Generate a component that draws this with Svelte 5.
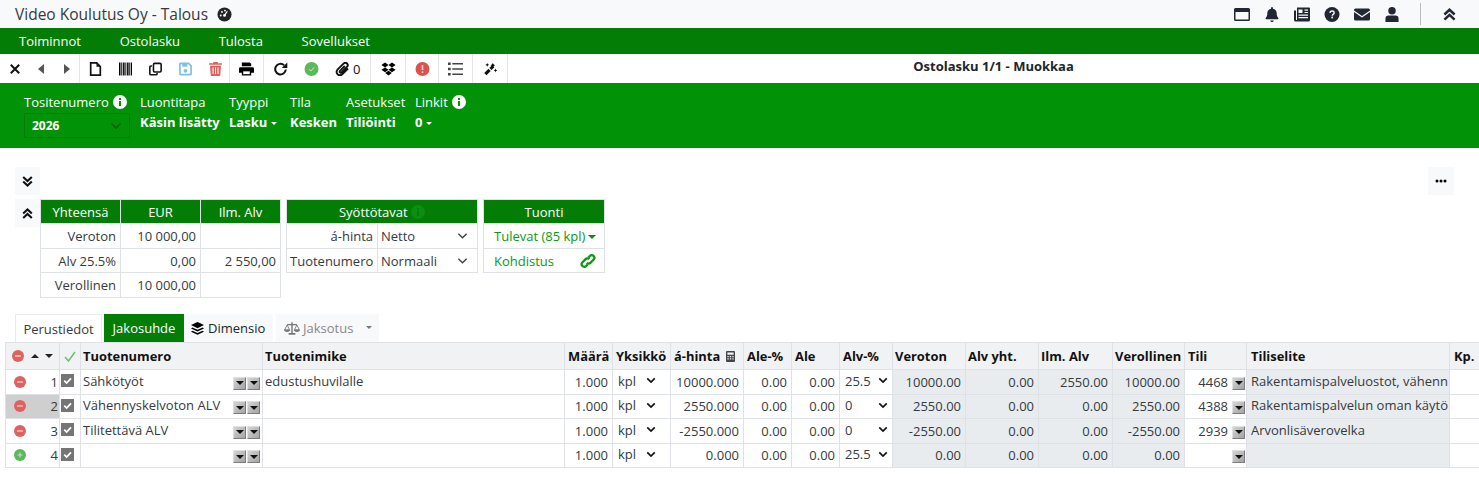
<script>
  const cols = ['', '', 'Tuotenumero', 'Tuotenimike', 'Määrä', 'Yksikkö', 'á-hinta', 'Ale-%', 'Ale', 'Alv-%', 'Veroton', 'Alv yht.', 'Ilm. Alv', 'Verollinen', 'Tili', 'Tiliselite', 'Kp.'];
  const rows = [
    { n: 1, tn: 'Sähkötyöt', nimi: 'edustushuvilalle', h: '10000.000', alv: '25.5', v: '10000.00', ay: '0.00', ia: '2550.00', vl: '10000.00', tili: '4468', sel: 'Rakentamispalveluostot, vähenn' },
    { n: 2, tn: 'Vähennyskelvoton ALV', nimi: '', h: '2550.000', alv: '0', v: '2550.00', ay: '0.00', ia: '0.00', vl: '2550.00', tili: '4388', sel: 'Rakentamispalvelun oman käytö' },
    { n: 3, tn: 'Tilitettävä ALV', nimi: '', h: '-2550.000', alv: '0', v: '-2550.00', ay: '0.00', ia: '0.00', vl: '-2550.00', tili: '2939', sel: 'Arvonlisäverovelka' },
    { n: 4, tn: '', nimi: '', h: '0.000', alv: '25.5', v: '0.00', ay: '0.00', ia: '0.00', vl: '0.00', tili: '', sel: '' }
  ];
  const menu = ['Toiminnot', 'Ostolasku', 'Tulosta', 'Sovellukset'];
</script>

{#snippet chev(cls)}
  <svg class={cls} viewBox="0 0 12 8"><path d="M1.500 1.500 6 6l4.500-4.500" fill="none" stroke="currentColor" stroke-width="1.600"/></svg>
{/snippet}
{#snippet dbl(up)}
  <svg class="dbl" viewBox="0 0 12 12"><g transform={up ? '' : 'rotate(180 6 6)'}><path d="M1.300 6 6 1.600 10.700 6M1.300 10.800 6 6.400l4.700 4.400" fill="none" stroke="currentColor" stroke-width="2.300"/></g></svg>
{/snippet}
{#snippet info()}
  <svg class="info" viewBox="0 0 14 14"><circle cx="7" cy="7" r="7" fill="currentColor"/><rect x="6" y="6" width="2" height="5" fill="#029208"/><rect x="6" y="3" width="2" height="2" fill="#029208"/></svg>
{/snippet}
{#snippet combo()}
  <span class="combo"><i></i></span>
{/snippet}

<div class="page">
  <header class="top">
    <div class="brand">
      <span>Video Koulutus Oy - Talous</span>
      <svg class="gauge" viewBox="0 0 16 16"><circle cx="8" cy="8" r="7.500" fill="#212529"/><circle cx="8" cy="9" r="1.500" fill="#fff"/><path d="M8 9l3-4.500" stroke="#fff" stroke-width="1.300"/><circle cx="4" cy="9" r="1" fill="#fff"/><circle cx="5.300" cy="5.200" r="1" fill="#fff"/><circle cx="8.500" cy="3.800" r="1" fill="#fff"/></svg>
    </div>
    <div class="top-icons">
      <svg viewBox="0 0 16 13"><path fill-rule="evenodd" d="M1.500 0h13A1.500 1.500 0 0 1 16 1.500v10a1.500 1.500 0 0 1-1.500 1.500h-13A1.500 1.500 0 0 1 0 11.500v-10A1.500 1.500 0 0 1 1.500 0ZM1.500 4v7.500h13V4Z"/></svg>
      <svg viewBox="0 0 14 16"><path d="M7 0c.6 0 1 .4 1 1v.8c2.400.4 4 2.400 4 4.700 0 2.800.6 4 1.700 5.200.4.500.1 1.300-.6 1.300H.9c-.7 0-1-.8-.6-1.300C1.400 10.500 2 9.300 2 6.500c0-2.300 1.600-4.300 4-4.700V1c0-.6.400-1 1-1Z"/><path d="M5.300 14.300h3.400C8.700 15.300 8 16 7 16s-1.700-.7-1.700-1.700Z"/></svg>
      <svg viewBox="0 0 16 14"><path fill-rule="evenodd" d="M3 0h12a1 1 0 0 1 1 1v11.500a1.500 1.500 0 0 1-1.500 1.500H1.500A1.500 1.500 0 0 1 0 12.500V3h2v9.500h.5a.5.500 0 0 0 .5-.5ZM4.500 2v3.500h4V2Zm6 0v1.200H14V2Zm0 2.400v1.100H14V4.400ZM4.500 7v1.200H14V7Zm0 2.600v1.200H14V9.600Z"/></svg>
      <svg viewBox="0 0 16 16"><circle cx="8" cy="8" r="8"/><path d="M5.800 6.300C5.900 5 6.800 4.200 8.100 4.200c1.300 0 2.200.8 2.200 1.900 0 1.700-2 1.700-2 3.100" fill="none" stroke="#f8f9fa" stroke-width="1.500"/><rect x="7.300" y="10.300" width="1.800" height="1.800" fill="#f8f9fa"/></svg>
      <svg viewBox="0 0 16 12"><path d="M1.500 0h13A1.500 1.500 0 0 1 16 1.500v.4L8 7.500 0 1.900v-.4A1.500 1.500 0 0 1 1.500 0Z"/><path d="M0 3.500 8 9l8-5.500v7A1.500 1.500 0 0 1 14.500 12h-13A1.500 1.500 0 0 1 0 10.500Z"/></svg>
      <svg viewBox="0 0 14 16"><circle cx="7" cy="4" r="4"/><path d="M3.500 9h7A3.500 3.500 0 0 1 14 12.500V16H0v-3.500A3.500 3.500 0 0 1 3.500 9Z"/></svg>
      <span class="vr"></span>
      <span class="collapse">{@render dbl(true)}</span>
    </div>
  </header>

  <nav class="menu">
    {#each menu as m}<span>{m}</span>{/each}
  </nav>

  <div class="toolbar">
    <div class="tools">
      <div class="grp g1">
        <span class="slot"><svg class="x" viewBox="0 0 10 10"><path d="M.8.800l8.400 8.400m0-8.400L.8 9.200" stroke="#111" stroke-width="2"/></svg></span>
        <span class="slot"><svg class="tri" viewBox="0 0 6 10"><path d="M6 0v10L0 5Z"/></svg></span>
        <span class="slot"><svg class="tri" viewBox="0 0 6 10"><path d="M0 0v10l6-5Z"/></svg></span>
      </div>
      <div class="grp g2">
        <span class="slot"><svg class="ic" viewBox="0 0 12 14"><path d="M1.200.9h6l3.600 3.600v8.600H1.200Z" fill="#fff" stroke="#111" stroke-width="1.700"/><path d="M7 .9v3.800h3.800" fill="#111"/></svg></span>
        <span class="slot"><svg class="ic" viewBox="0 0 13 13"><path d="M0 0h1.500v13H0Zm2.300 0h1v13h-1Zm1.800 0h1.500v13H4.100Zm2.300 0h.9v13h-.9Zm1.700 0h1.500v13H8.100Zm2.200 0h1v13h-1Zm1.700 0h1v13h-1Z"/></svg></span>
        <span class="slot"><svg class="ic" viewBox="0 0 14 14"><rect x="4.800" y=".9" width="8.300" height="9.400" rx="1.300" fill="none" stroke="#111" stroke-width="1.700"/><path d="M3.200 3.800H2A1.200 1.200 0 0 0 .9 5v7c0 .7.500 1.200 1.100 1.200h5.500c.6 0 1.200-.5 1.200-1.200v-.7" fill="none" stroke="#111" stroke-width="1.700"/></svg></span>
        <span class="slot"><svg class="ic" viewBox="0 0 14 14"><path d="M1.600 1h8.700L13 3.700v8.700a.6.600 0 0 1-.6.600H1.600a.6.600 0 0 1-.6-.6V1.600a.6.600 0 0 1 .6-.6Z" fill="#fff" stroke="#7cc0e6" stroke-width="1.800"/><rect x="3.500" y="1.500" width="5.500" height="3" fill="#7cc0e6"/><circle cx="7" cy="9" r="2" fill="#7cc0e6"/></svg></span>
        <span class="slot"><svg class="ic" viewBox="0 0 13 14"><path d="M4.500 0h4l.6 1.200H13v1.600H0V1.200h3.900Z" fill="#dd6360"/><path d="M1 3.800h11l-.7 9.100c0 .6-.5 1.100-1.100 1.100H2.800c-.6 0-1.100-.5-1.100-1.100Z" fill="#dd6360"/><path d="M4 5.500v6.500m2.500-6.500v6.500M9 5.500v6.500" stroke="#fff" stroke-width="1"/></svg></span>
      </div>
      <div class="grp g3">
        <svg class="ic big" viewBox="0 0 16 14"><path d="M3 0h8.500L13 1.500V4H3Z"/><path d="M1.500 5h13A1.500 1.500 0 0 1 16 6.500V11h-3v3H3v-3H0V6.500A1.500 1.500 0 0 1 1.500 5Z"/><rect x="4.500" y="9.500" width="7" height="3" fill="#fff"/></svg>
      </div>
      <div class="grp g4">
        <span class="slot s31"><svg class="ic big" viewBox="0 0 14 14"><path d="M12.300 7.500a5.300 5.300 0 1 1-1.700-4.300" fill="none" stroke="#111" stroke-width="2"/><path d="M13.800.5v5.600H8.200Z" fill="#111"/></svg></span>
        <span class="slot s31"><svg class="ic big" viewBox="0 0 14 14"><circle cx="7" cy="7" r="7" fill="#5cb85c"/><path d="M4.500 7.200l1.800 1.800 3.400-3.600" fill="none" stroke="#cfeacf" stroke-width="1"/></svg></span>
        <span class="slot s31"><svg class="ic big" viewBox="0 0 14 14"><path d="M12.500 6.500 7 12c-1.500 1.400-3.700 1.500-5 .2-1.300-1.300-1.200-3.500.2-4.900L8 1.600c1-1 2.500-1 3.500-.1.900.9.900 2.400-.1 3.400L6 10.300c-.5.500-1.200.5-1.600.1-.4-.4-.4-1.100.1-1.600L9.300 4" fill="none" stroke="#111" stroke-width="1.900"/></svg></span>
        <b class="count">0</b>
      </div>
      <div class="grp g5">
        <svg class="ic big" viewBox="0 0 16 14"><path d="M4.300 0 8 2.600 4.300 5.300.4 2.700Zm7.400 0 3.900 2.700-3.900 2.600L8 2.600ZM4.300 5.300 8 7.900 4.300 10.500.4 7.900Zm7.400 0 3.900 2.600-3.900 2.600L8 7.900ZM4.500 11.300 8 8.800l3.500 2.500L8 14Z"/></svg>
      </div>
      <div class="grp g6">
        <svg class="ic big" viewBox="0 0 14 14"><circle cx="7" cy="7" r="7" fill="#d9534f"/><rect x="6.200" y="3" width="1.600" height="5" fill="#f6d5d4"/><rect x="6.200" y="9.300" width="1.600" height="1.700" fill="#f6d5d4"/></svg>
      </div>
      <div class="grp g7">
        <svg class="ic big" viewBox="0 0 14 12"><path fill="#444" d="M0 0h2.500v2.200H0Zm4 .3h10v1.600H4ZM0 4.900h2.500v2.200H0Zm4 .3h10v1.600H4ZM0 9.800h2.500V12H0Zm4 .3h10v1.600H4Z"/></svg>
      </div>
      <div class="grp g8">
        <svg class="ic" viewBox="0 0 14 14"><path d="M1.500 12.500 6 8" stroke="#111" stroke-width="3.400"/><path d="M7 7l3-3" stroke="#111" stroke-width="3.400"/><path d="M9.500.5l.9 1.600 1.600.9-1.600.9-.9 1.600-.9-1.600L7 3l1.600-.9ZM12.500 6.500l.6 1.400 1.400.6-1.400.6-.6 1.400-.6-1.400-1.400-.6 1.400-.6ZM3.500.5l.6 1.400 1.400.6-1.400.6-.6 1.400-.6-1.400L1.500 2.500l1.400-.6Z"/></svg>
      </div>
    </div>
    <div class="tool-title">Ostolasku 1/1 - Muokkaa</div>
  </div>

  <section class="hero">
    <div class="f f1"><label>Tositenumero {@render info()}</label><div class="yearsel"><b>2026</b>{@render chev('yc')}</div></div>
    <div class="f f2"><label>Luontitapa</label><strong>Käsin lisätty</strong></div>
    <div class="f f3"><label>Tyyppi</label><strong>Lasku <i class="caret"></i></strong></div>
    <div class="f f4"><label>Tila</label><strong>Kesken</strong></div>
    <div class="f f5"><label>Asetukset</label><strong>Tiliöinti</strong></div>
    <div class="f f6"><label>Linkit {@render info()}</label><strong>0 <i class="caret"></i></strong></div>
  </section>

  <section class="main">
    <div class="row1">
      <span class="sq">{@render dbl(false)}</span>
      <span class="sq more"><svg viewBox="0 0 12 4"><circle cx="2" cy="2" r="1.500"/><circle cx="6" cy="2" r="1.500"/><circle cx="10" cy="2" r="1.500"/></svg></span>
    </div>
    <div class="panels">
      <span class="sq sq2">{@render dbl(true)}</span>
      <table class="mini t1">
        <thead><tr><th>Yhteensä</th><th>EUR</th><th>Ilm. Alv</th></tr></thead>
        <tbody>
          <tr><td>Veroton</td><td>10 000,00</td><td></td></tr>
          <tr><td>Alv 25.5%</td><td>0,00</td><td>2 550,00</td></tr>
          <tr><td>Verollinen</td><td>10 000,00</td><td></td></tr>
        </tbody>
      </table>
      <table class="mini t2">
        <colgroup><col class="k1" /><col class="k2" /></colgroup>
        <thead><tr><th colspan="2">Syöttötavat <svg class="info dk" viewBox="0 0 14 14"><circle cx="7" cy="7" r="7" fill="#0a8f12"/><rect x="6" y="6" width="2" height="5" fill="#04800a"/><rect x="6" y="3" width="2" height="2" fill="#04800a"/></svg></th></tr></thead>
        <tbody>
          <tr><td>á-hinta</td><td class="sel"><span>Netto</span>{@render chev('sc')}</td></tr>
          <tr><td>Tuotenumero</td><td class="sel"><span>Normaali</span>{@render chev('sc')}</td></tr>
        </tbody>
      </table>
      <table class="mini t3">
        <thead><tr><th>Tuonti</th></tr></thead>
        <tbody>
          <tr><td class="gr"><span>Tulevat (85 kpl)</span><i class="dn"></i></td></tr>
          <tr><td class="gr"><span>Kohdistus</span>
            <svg class="lnk" viewBox="0 0 14 14"><path d="M6 8.500c.8.900 2.200 1 3.100.1l2.700-2.700c1-1 1-2.400.1-3.300-.9-.9-2.400-.9-3.300.1L7.300 4" fill="none" stroke="#0a9a10" stroke-width="2"/><path d="M8 5.500c-.8-.9-2.200-1-3.100-.1L2.200 8.100c-1 1-1 2.400-.1 3.300.9.900 2.400.9 3.300-.1L6.700 10" fill="none" stroke="#0a9a10" stroke-width="2"/></svg>
          </td></tr>
        </tbody>
      </table>
    </div>

    <div class="tabs">
      <span class="tab active">Perustiedot</span>
      <span class="tab green">Jakosuhde</span>
      <span class="tab light"><svg viewBox="0 0 14 14"><path d="M7 0l7 3.300-7 3.300L0 3.300Z"/><path d="M1.500 5.800 7 8.400l5.500-2.600L14 6.900 7 10.200 0 6.900Z"/><path d="M1.500 9.300 7 11.900l5.500-2.600 1.500 1.100L7 13.700 0 10.400Z"/></svg>Dimensio</span>
      <span class="tab light off"><svg viewBox="0 0 18 14"><path d="M8.200 0h1.600v12h3v2h-7.600v-2h3ZM3.500 2h11v1.300h-11Z" fill="#777"/><path d="M3.500 3 .7 8.500h5.600ZM14.500 3l-2.800 5.500h5.600Z" fill="none" stroke="#777"/><path d="M0 8.500h7C7 10 5.500 11 3.500 11S0 10 0 8.500Zm11 0h7c0 1.500-1.500 2.500-3.500 2.500S11 10 11 8.500Z" fill="#777"/></svg>Jaksotus<i class="caret gy"></i></span>
    </div>

    <div class="grid">
      <div class="gr-row head">
        <div class="c c0 hdrctl">
          <svg class="rnd" viewBox="0 0 12 12"><circle cx="6" cy="6" r="6" fill="#dd6360"/><rect x="3" y="5.200" width="6" height="1.600" fill="#f3c0be"/></svg>
          <i class="up"></i><i class="down"></i>
        </div>
        <div class="c c1 ctr"><svg class="chk" viewBox="0 0 12 11"><path d="M1 6l3.500 4L11 1" fill="none" stroke="#6cc070" stroke-width="1.500"/></svg></div>
        {#each cols.slice(2) as c, i}
          <div class="c hc c{i + 2}">{c}{#if c === 'á-hinta'}<svg class="calc" viewBox="0 0 10 12"><path fill-rule="evenodd" d="M1 0h8a1 1 0 0 1 1 1v10a1 1 0 0 1-1 1H1a1 1 0 0 1-1-1V1a1 1 0 0 1 1-1Zm.5 1.500v2.500h7V1.500Zm0 4v1.300h1.500V5.500Zm2.700 0v1.300h1.600V5.500Zm2.800 0v1.300h1.500V5.500Zm-5.500 2.500v1.300h1.500V8Zm2.700 0v1.300h1.600V8Zm2.800 0v1.300h1.500V8Z"/></svg>{/if}</div>
        {/each}
      </div>
      {#each rows as r}
        <div class="gr-row">
          <div class="c c0 numc" class:hl={r.n === 2}>
            {#if r.n === 4}
              <svg class="rnd" viewBox="0 0 12 12"><circle cx="6" cy="6" r="6" fill="#5cb85c"/><path d="M3.500 6h5M6 3.500v5" stroke="#bfe5bf" stroke-width="1.100"/></svg>
            {:else}
              <svg class="rnd" viewBox="0 0 12 12"><circle cx="6" cy="6" r="6" fill="#dd6360"/><rect x="3" y="5.300" width="6" height="1.400" fill="#f3c0be"/></svg>
            {/if}
            <span>{r.n}</span>
          </div>
          <div class="c c1 cbc"><span class="cb"><svg viewBox="0 0 12 12"><path d="M3 6.200l2.200 2.200 4-4.400" fill="none" stroke="#fff" stroke-width="1.600"/></svg></span></div>
          <div class="c c2 txt"><span>{r.tn}</span><em>{@render combo()}{@render combo()}</em></div>
          <div class="c c3 txt">{r.nimi}</div>
          <div class="c c4 num">1.000</div>
          <div class="c c5 txt dd"><span>kpl</span><svg viewBox="0 0 12 8"><path d="M1.500 1.500 6 6l4.500-4.500" fill="none" stroke="#111" stroke-width="2"/></svg></div>
          <div class="c c6 num">{r.h}</div>
          <div class="c c7 num">0.00</div>
          <div class="c c8 num">0.00</div>
          <div class="c c9 txt dd d2"><span>{r.alv}</span><svg viewBox="0 0 12 8"><path d="M1.500 1.500 6 6l4.500-4.500" fill="none" stroke="#111" stroke-width="2"/></svg></div>
          <div class="c c10 num ro">{r.v}</div>
          <div class="c c11 num ro">{r.ay}</div>
          <div class="c c12 num ro">{r.ia}</div>
          <div class="c c13 num ro">{r.vl}</div>
          <div class="c c14 tili"><span>{r.tili}</span>{@render combo()}</div>
          <div class="c c15 txt ro">{r.sel}</div>
          <div class="c c16"></div>
        </div>
      {/each}
    </div>
  </section>
</div>

<style>
  :global(body) { margin: 0; background: #fff; overflow: hidden; }
  .page { width: 1479px; height: 491px; font-family: "Open Sans", "Noto Sans", sans-serif; font-size: 13px; color: #212529; overflow: hidden; }
  svg { display: block; flex: none; }

  .top { height: 28px; background: #f8f9fa; display: flex; align-items: center; justify-content: space-between; box-sizing: border-box; padding: 0 23px 0 15px; }
  .brand { display: flex; align-items: center; gap: 9px; font-size: 15.500px; color: #343a40; white-space: nowrap; }
  .gauge { width: 15px; height: 15px; }
  .top-icons { display: flex; align-items: center; fill: #212733; }
  .top-icons > svg { width: 16px; height: 15px; margin-right: 14px; }
  .vr { width: 1px; height: 22px; background: #b9bdc2; margin: 0 22px 0 6px; }
  .collapse { width: 13px; color: #212733; }
  .collapse .dbl { width: 13px; height: 13px; }
  .dbl { width: 11px; height: 11px; }

  .menu { height: 26px; background: #047d07; color: #fff; display: flex; align-items: center; padding-left: 19px; gap: 38.700px; font-size: 13px; font-weight: 500; }

  .toolbar { height: 29px; background: #fff; display: flex; align-items: stretch; }
  .tools { display: flex; width: 508px; flex: none; border-right: 1px solid #e3e5e8; box-sizing: border-box; }
  .grp { display: flex; align-items: center; border-right: 1px solid #e3e5e8; box-sizing: border-box; justify-content: center; }
  .grp:last-child { border-right: 0; }
  .slot { display: flex; justify-content: center; align-items: center; width: 30px; flex: none; }
  .g1 { width: 80px; padding-left: 2px; justify-content: flex-start; }
  .g1 .slot { width: 26px; }
  .g2 { width: 150px; justify-content: flex-start; }
  .g3 { width: 34px; }
  .g4 { width: 107px; padding-left: 1px; justify-content: flex-start; }
  .s31 { width: 31px; }
  .g5 { width: 35px; }
  .g6 { width: 33px; }
  .g7 { width: 34px; }
  .g8 { flex: 1; }
  .x { width: 10px; height: 10px; }
  .ic { width: 13px; height: 14px; }
  .ic.big { width: 15px; height: 14px; }
  .tri { width: 6px; height: 10px; fill: #555; }
  .count { font-weight: 400; font-size: 13px; color: #111; margin-left: -5px; }
  .tool-title { flex: 1; text-align: center; font-weight: 700; font-size: 13px; line-height: 25px; color: #212529; }

  .hero { height: 65px; background: #029208; color: #fff; display: flex; align-items: flex-start; padding: 10px 0 0 24px; box-sizing: border-box; }
  .f label { display: flex; align-items: center; gap: 4px; font-size: 13px; height: 18px; white-space: nowrap; }
  .f strong { display: block; font-size: 13px; margin-top: 2px; line-height: 18px; white-space: nowrap; font-weight: 700; }
  .f1 { width: 116px; }
  .f2 { width: 89px; }
  .f3 { width: 61px; }
  .f4 { width: 56px; }
  .f5 { width: 69px; }
  .info { width: 14px; height: 14px; color: #fff; display: inline-block; }
  .yearsel { width: 106px; height: 25px; box-sizing: border-box; border: 1px solid #07780c; margin-top: 2px; display: flex; align-items: center; justify-content: space-between; padding: 0 7px; font-size: 12px; }
  .yc { width: 12px; height: 8px; color: #0a5a0e; }
  .caret { display: inline-block; width: 0; height: 0; border: 3px solid transparent; border-top-color: currentColor; border-bottom: 0; vertical-align: middle; margin-left: 0; }

  .row1 { display: flex; justify-content: space-between; padding: 19px 25px 0 15px; }
  .sq { width: 25px; height: 28px; background: #f8f9fa; display: flex; align-items: center; justify-content: center; color: #111; }
  .more { width: 26px; }
  .more svg { width: 12px; height: 4px; }
  .panels { display: flex; align-items: flex-start; margin-top: 4px; padding-left: 15px; }
  .mini { border-collapse: collapse; font-size: 13px; table-layout: fixed; margin-right: 5px; }
  .mini th { background: #047d07; color: #fff; font-weight: 500; height: 24px; box-sizing: border-box; padding: 0; border: 1px solid #dee2e6; }
  .mini td { height: 25px; border: 1px solid #dee2e6; padding: 0 4px; box-sizing: border-box; text-align: right; color: #343a40; white-space: nowrap; }
  .mini tr:nth-child(2) td { height: 24px; }
  .t1 { width: 241px; }
  .t2 { width: 191px; }
  .t3 { width: 122px; }
  .k1 { width: 91px; }
  .k2 { width: 100px; }
  .t2 td:first-child { padding: 0 4px 0 3px; }
  .t2 th .info { vertical-align: -2px; }
  td.sel { text-align: left; padding: 0 10px 0 3px; position: relative; }
  .sc { position: absolute; right: 9px; top: 8px; width: 11px; height: 8px; color: #444; }
  td.gr { text-align: left; color: #0a9a10; padding: 0 7px 0 10px; position: relative; }
  .dn { position: absolute; right: 8px; top: 11px; width: 0; height: 0; border: 4px solid transparent; border-top: 4px solid #0a8a10; border-bottom: 0; }
  .lnk { position: absolute; right: 8px; top: 4px; width: 16px; height: 16px; }

  .tabs { display: flex; margin: 16px 0 0 15px; height: 28px; align-items: stretch; font-size: 13px; }
  .tab { display: flex; align-items: center; box-sizing: border-box; }
  .tab svg { width: 13px; height: 13px; }
  .active { width: 87px; border: 1px solid #e9ecef; border-bottom: 0; background: #fff; justify-content: center; color: #343a40; margin-right: 2px; }
  .green { width: 80px; background: #047d07; color: #fff; justify-content: center; margin-right: 0; }
  .light { background: #f8f9fa; width: 89px; padding: 0 0 0 7px; gap: 4px; color: #212529; margin-right: 3px; }
  .off { width: 103px; color: #888; padding-left: 8px; gap: 3px; position: relative; margin-right: 0; }
  .off svg { width: 16px; }
  .gy { position: absolute; right: 7px; top: 12px; color: #777; }

  .grid { margin-left: 5px; width: 1474px; border-top: 1px solid #dee2e6; border-left: 1px solid #dee2e6; box-sizing: border-box; }
  .gr-row { display: flex; height: 24.500px; box-sizing: border-box; border-bottom: 1px solid #dee2e6; }
  .head { height: 27px; background: #f1f2f3; }
  .c { box-sizing: border-box; border-right: 1px solid #dee2e6; height: 100%; display: flex; align-items: center; overflow: hidden; white-space: nowrap; flex: none; font-size: 13px; color: #343a40; padding: 0 2px; }
  .hc { font-weight: 700; font-size: 12.900px; color: #111; padding: 0 2px 0 3px; }
  .c0 { width: 54px; }
  .c1 { width: 21px; }
  .c2 { width: 182px; }
  .c3 { width: 302px; }
  .c4 { width: 48px; }
  .c5 { width: 58px; }
  .c6 { width: 73px; }
  .c7 { width: 48px; }
  .c8 { width: 48px; }
  .c9 { width: 53px; }
  .c10 { width: 73px; }
  .c11 { width: 73px; }
  .c12 { width: 74px; }
  .c13 { width: 72px; }
  .c14 { width: 62px; }
  .c15 { width: 203px; }
  .c16 { width: 40px; }
  .hc.c2, .hc.c3, .hc.c10, .hc.c11, .hc.c12, .hc.c13 { padding-left: 2px; }
  .hc.c15, .hc.c16 { padding-left: 4px; }
  .hdrctl { padding-left: 6px; }
  .up, .down { width: 0; height: 0; border: 4px solid transparent; }
  .up { border-top: 0; border-bottom: 4px solid #222; margin-left: 7px; }
  .down { border-bottom: 0; border-top: 4px solid #222; margin-left: 6px; }
  .rnd { width: 12px; height: 12px; }
  .ctr { justify-content: center; padding: 0; }
  .chk { width: 12px; height: 11px; }
  .calc { width: 9px; height: 11px; margin-left: 6px; fill: #444; }
  .numc { justify-content: space-between; padding: 0 1px 0 8px; }
  .hl { background: #cfcfcf; }
  .cbc { padding: 0 0 0 1px; }
  .cb { width: 13px; height: 13px; background: #757575; display: flex; margin-top: -2px; }
  .cb svg { width: 13px; height: 13px; }
  .txt { padding: 0 3px 2px; }
  .c2.txt { padding-left: 2px; padding-right: 2px; justify-content: space-between; }
  .c3.txt { padding-left: 2px; }
  .c15.txt { padding-left: 4px; padding-right: 0; }
  .c2 em { display: flex; gap: 1px; padding-top: 5px; }
  .num { justify-content: flex-end; padding: 0 4px 0 0; }
  .dd { justify-content: space-between; padding: 0 14px 2px 5px; }
  .dd svg { width: 10px; height: 7px; }
  .d2 { padding: 0 4px 2px 5px; }
  .ro { background: #e9ecef; }
  .combo { width: 13px; height: 13px; background: linear-gradient(135deg, #d4d4d4, #a4a4a4); border: 1px solid; border-color: #e0e0e0 #7c7c7c #7c7c7c #e0e0e0; box-sizing: border-box; display: flex; align-items: center; justify-content: center; flex: none; }
  .combo i { width: 0; height: 0; border: 4px solid transparent; border-top: 4px solid #111; border-bottom: 0; }
  .tili { justify-content: flex-end; gap: 4px; padding-right: 1px; }
  .tili .combo { margin-top: 3px; }
</style>
